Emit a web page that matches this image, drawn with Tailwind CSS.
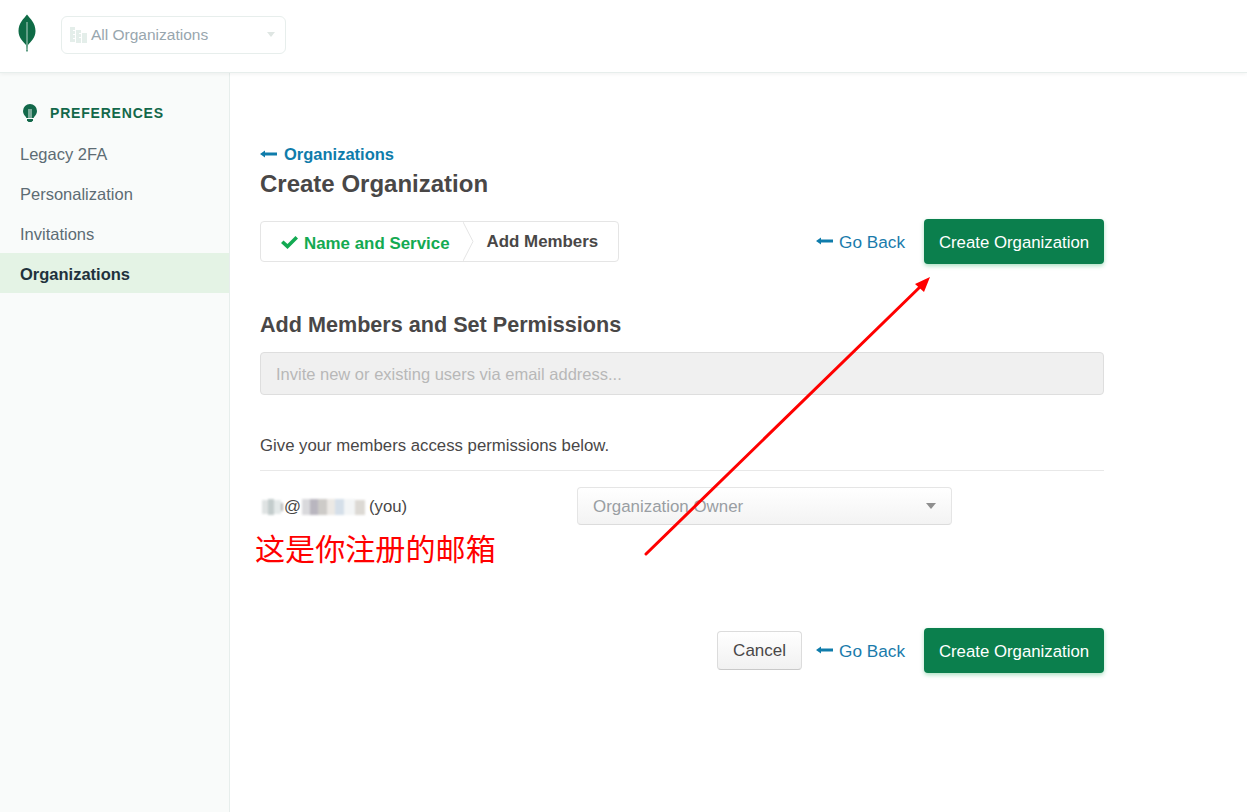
<!DOCTYPE html>
<html lang="zh-CN">
<head>
    <meta charset="UTF-8">
    <meta name="viewport" content="width=device-width, initial-scale=1.0">
    <title>Create Organization</title>
    <script src="https://cdn.jsdelivr.net/npm/@tailwindcss/browser@4"></script>
</head>
<body class="relative h-[812px] w-[1247px] overflow-hidden bg-white font-['Liberation_Sans',sans-serif] text-[#494747]">
    <!-- top bar -->
    <header class="relative z-10 flex h-[73px] items-center border-b border-[#e7eeec] bg-white pb-[3px] pl-[18px] shadow-[0_1px_4px_rgba(0,0,0,0.06)]">
        <svg class="mb-[4px] h-[38px] w-[18px]" viewBox="0 0 18 38">
            <path d="M9 0.5C12 4.5 17.5 9 17.5 17C17.5 24 12.5 28 10 31L9.6 37.5H8.4L8 31C5.5 28 0.5 24 0.5 17C0.5 9 6 4.5 9 0.5Z" fill="#0f6b46"/>
            <path d="M9 8V36" stroke="#dfeee7" stroke-width="0.8"/>
        </svg>
        <div class="ml-[25px] flex h-[38px] w-[225px] items-center rounded-[6px] border border-[#e7eeec] pl-[8px] pr-[10px]">
            <svg class="h-[16px] w-[17px]" viewBox="0 0 17 16" fill="#e4eeea">
                <path d="M0 0h5v3H3v1h2v3H3v1h2v3H3v1h2v3H0zM6 3h5v3H9v1h2v3H9v1h2v5H6zM12 6h5v10h-5z"/>
            </svg>
            <span class="ml-[4px] text-[15.5px] text-[#98a6ae]">All Organizations</span>
            <span class="ml-auto h-0 w-0 border-x-[4.5px] border-t-[5px] border-x-transparent border-t-[#dfe6e3]"></span>
        </div>
    </header>

    <div class="flex h-[739px]">
        <!-- sidebar -->
        <aside class="w-[230px] border-r border-[#e7eeec] bg-[#f9fbfa] pt-[30px]">
            <div class="flex h-[20px] items-center pl-[23px]">
                <svg class="h-[18px] w-[14px]" viewBox="0 0 14 18">
                    <path d="M7 0a7 7 0 0 1 7 7c0 2.600-1.400 4.200-2.500 5.500-.5.600-.7 1.200-.8 1.500H3.300c-.1-.3-.3-.9-.8-1.500C1.400 11.200 0 9.600 0 7a7 7 0 0 1 7-7z" fill="#13684a"/>
                    <path d="M6 5v9M8 5v9" stroke="#f9fbfa" stroke-width="0.9"/>
                    <path d="M4 15h6v1.500L8.500 18h-3L4 16.500z" fill="#13684a"/>
                </svg>
                <span class="ml-[13px] text-[14px] font-bold tracking-[0.8px] text-[#13684a]">PREFERENCES</span>
            </div>
            <nav class="mt-[10px] text-[16.5px] text-[#5d6c74]">
                <a class="flex h-[40px] items-center pl-[20px] pt-[2px]">Legacy 2FA</a>
                <a class="flex h-[40px] items-center pl-[20px] pt-[2px]">Personalization</a>
                <a class="flex h-[40px] items-center pl-[20px] pt-[2px]">Invitations</a>
                <a class="flex h-[40px] items-center bg-[#e4f3e5] pl-[20px] pt-[2px] font-bold text-[#21313c]">Organizations</a>
            </nav>
        </aside>

        <!-- main content -->
        <main class="w-[874px] pl-[30px] pt-[71px]">
            <a class="flex h-[20px] items-center text-[16.5px] font-bold text-[#0f7cab]">
                <svg class="mr-[7px] h-[10px] w-[17px]" viewBox="0 0 17 10" fill="#0f7cab"><path d="M0 5 5 1.500V3.600H17V6.400H5V8.500z"/></svg>
                Organizations
            </a>
            <h1 class="mt-[7px] h-[30px] text-[24px] leading-[25px] font-bold">Create Organization</h1>

            <div class="mt-[18px] flex items-center justify-between">
                <div class="relative flex h-[41px] w-[359px] items-center rounded-[4px] border border-[#e5e5e5] text-[16.9px] font-bold">
                    <svg class="ml-[20px] mt-[1px] h-[13px] w-[17px]" viewBox="0 0 17 13" fill="#13aa52"><path d="M0 7 2.500 4.500 6.500 8 14.500 0 17 2.500 6.500 13z"/></svg>
                    <span class="ml-[6px] pt-[5px] text-[#13aa52]">Name and Service</span>
                    <span class="ml-[37px] pt-[1px]">Add Members</span>
                    <svg class="absolute left-[202px] top-0 h-[39px] w-[11px]" viewBox="0 0 11 39" fill="none"><path d="M0 0 10 19.500 0 39" stroke="#e5e5e5"/></svg>
                </div>
                <div class="flex items-center">
                    <a class="flex items-center text-[17.2px] text-[#1a7bab]">
                        <svg class="mr-[6px] h-[10px] w-[17px]" viewBox="0 0 17 10" fill="#0f7cab"><path d="M0 5 5 1.500V3.600H17V6.400H5V8.500z"/></svg>
                        <span class="pt-[2px]">Go Back</span>
                    </a>
                    <button class="ml-[19px] h-[45px] w-[180px] rounded-[4px] bg-[#0b7f4d] pt-[2px] text-[16.8px] text-white shadow-[0_2px_4px_rgba(19,170,82,0.35)]">Create Organization</button>
                </div>
            </div>

            <h2 class="mt-[47px] h-[28px] text-[21.6px] leading-[28px] font-bold">Add Members and Set Permissions</h2>
            <input disabled placeholder="Invite new or existing users via email address..." class="mt-[13px] h-[43px] w-full rounded-[4px] border border-[#dedede] bg-[#f0f0f0] px-[15px] pt-[2px] text-[16.5px] placeholder:text-[#b8b8b8]">

            <p class="mt-[40px] h-[20px] text-[16.75px] leading-[22px]">Give your members access permissions below.</p>
            <div class="mt-[15px] border-t border-[#e8e8e8]"></div>

            <div class="mt-[16px] flex h-[38px] items-center">
                <div class="flex w-[317px] items-center pt-[2px] text-[16.75px]">
                    <span class="flex h-[18px] items-center pl-[2px] blur-[1px]">
                        <span class="h-[14px] w-[6px] bg-[#dfe3e3]"></span>
                        <span class="h-[16px] w-[6px] bg-[#c3cccc]"></span>
                        <span class="h-[14px] w-[7px] bg-[#e4e9e9]"></span>
                        <span class="h-[8px] w-[2px] bg-[#b5b5b5]"></span>
                    </span>
                    <span class="ml-[1px]">@</span>
                    <span class="ml-[1px] flex h-[18px] items-center blur-[1px]">
                        <span class="h-[16px] w-[8px] bg-[#d9d9dc]"></span>
                        <span class="h-[16px] w-[8px] bg-[#b9b6bf]"></span>
                        <span class="h-[16px] w-[9px] bg-[#cdcbc8]"></span>
                        <span class="h-[16px] w-[8px] bg-[#ece9e5]"></span>
                        <span class="h-[16px] w-[9px] bg-[#d5dfe9]"></span>
                        <span class="h-[16px] w-[11px] bg-[#f3f5f6]"></span>
                        <span class="h-[15px] w-[10px] bg-[#dcd9d4]"></span>
                    </span>
                    <span class="ml-[4px]">(you)</span>
                </div>
                <div class="flex h-[38px] w-[375px] items-center justify-between rounded-[4px] border border-[#e5e5e5] border-b-[#dcdcdc] bg-gradient-to-b from-white to-[#f3f3f3] pl-[15px] pr-[15px] text-[16.9px] text-[#999ea3]">
                    <span class="pt-[2px]">Organization Owner</span>
                    <span class="h-0 w-0 border-x-[5.5px] border-t-[6px] border-x-transparent border-t-[#8f8f8f]"></span>
                </div>
            </div>

            <div class="mt-[103px] flex items-center justify-end">
                <button class="h-[39px] w-[85px] rounded-[4px] border border-[#dcdcdc] border-b-[#c9c9c9] bg-gradient-to-b from-white to-[#f1f1f1] pt-[1px] text-[17px] text-[#494747]">Cancel</button>
                <a class="ml-[14px] flex items-center text-[17.2px] text-[#1a7bab]">
                    <svg class="mr-[6px] h-[10px] w-[17px]" viewBox="0 0 17 10" fill="#0f7cab"><path d="M0 5 5 1.500V3.600H17V6.400H5V8.500z"/></svg>
                    <span class="pt-[2px]">Go Back</span>
                </a>
                <button class="ml-[19px] h-[45px] w-[180px] rounded-[4px] bg-[#0b7f4d] pt-[2px] text-[16.8px] text-white shadow-[0_2px_4px_rgba(19,170,82,0.35)]">Create Organization</button>
            </div>
        </main>
    </div>

    <!-- red annotation drawn over the page -->
    <span class="absolute left-[255px] top-[527px] font-['Noto_Sans_CJK_SC',sans-serif] text-[30.1px] leading-[40px] text-[#ff0000]">这是你注册的邮箱</span>
    <svg class="absolute left-0 top-0 h-[812px] w-[1247px]" viewBox="0 0 1247 812" fill="none">
        <path d="M646 554 922 285" stroke="#ff0000" stroke-width="3" stroke-linecap="round"/>
        <path d="M930 277 915 284 924 292z" fill="#ff0000"/>
    </svg>
</body>
</html>
